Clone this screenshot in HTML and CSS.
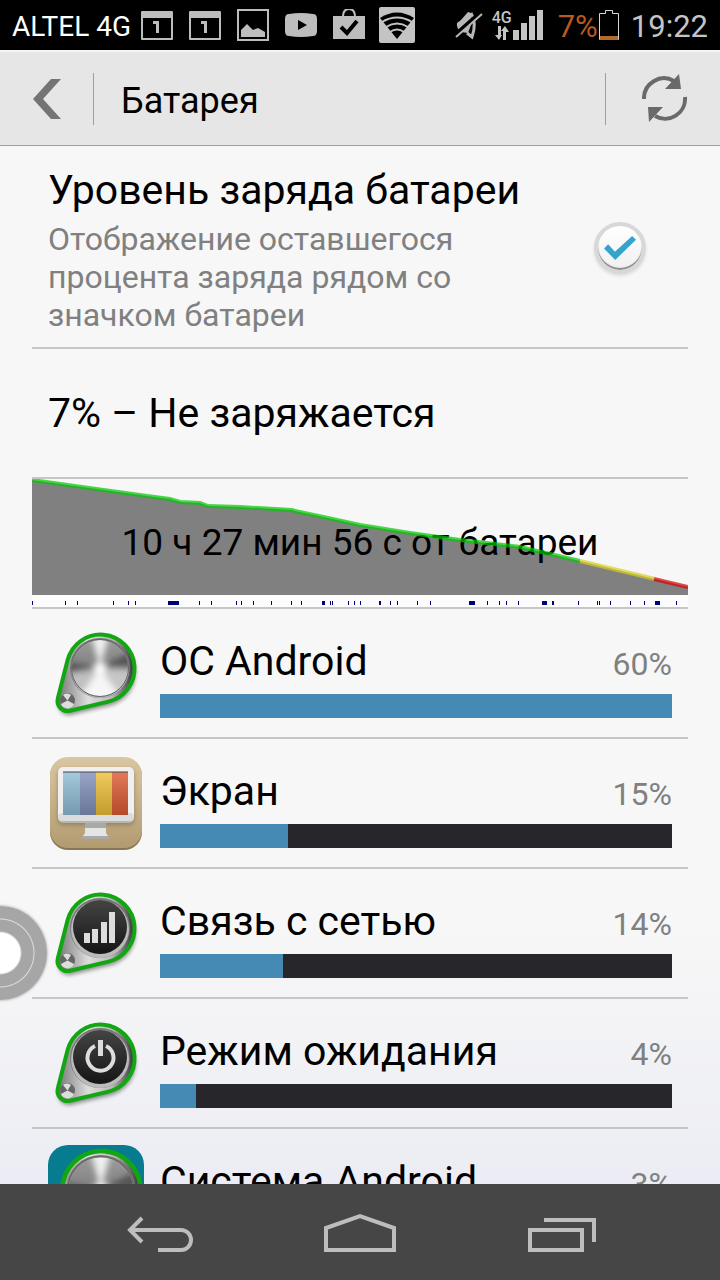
FILE: index.html
```html
<!DOCTYPE html>
<html lang="ru">
<head>
    <meta charset="UTF-8">
    <meta name="viewport" content="width=device-width, initial-scale=1.0">
    <title>Батарея</title>
    <link rel="stylesheet" href="styles.css">
</head>
<body>
    <!-- shared shapes -->
    <svg class="defs" width="0" height="0" aria-hidden="true">
        <defs>
            <linearGradient id="steel" x1="0" y1="0" x2="0" y2="1">
                <stop offset="0" stop-color="#9c9c9c"/>
                <stop offset="0.5" stop-color="#808080"/>
                <stop offset="1" stop-color="#e4e4e4"/>
            </linearGradient>
            <linearGradient id="rim" x1="0" y1="0" x2="1" y2="0">
                <stop offset="0" stop-color="#777"/>
                <stop offset="0.4" stop-color="#ddd"/>
                <stop offset="0.7" stop-color="#bbb"/>
                <stop offset="1" stop-color="#333"/>
            </linearGradient>
            <linearGradient id="dark" x1="0" y1="0" x2="0" y2="1">
                <stop offset="0" stop-color="#444"/>
                <stop offset="1" stop-color="#151515"/>
            </linearGradient>
            <linearGradient id="sand" x1="0" y1="0" x2="0" y2="1">
                <stop offset="0" stop-color="#d9c7a3"/>
                <stop offset="1" stop-color="#b39b70"/>
            </linearGradient>
            <linearGradient id="shade" x1="0" y1="0" x2="0" y2="1">
                <stop offset="0" stop-color="#fff" stop-opacity="0.2"/>
                <stop offset="1" stop-color="#000" stop-opacity="0.18"/>
            </linearGradient>
            <filter id="soft" x="-20%" y="-20%" width="140%" height="140%"><feGaussianBlur stdDeviation="2"/></filter>
            <filter id="softer" x="-20%" y="-20%" width="140%" height="140%"><feGaussianBlur stdDeviation="3"/></filter>
            <clipPath id="disc"><circle cx="52" cy="43" r="28"/></clipPath>
            <g id="case">
                <path d="M19.6 35.1A34 34 0 1 1 60.4 76.6L21.8 85.7A10 10 0 0 1 9.8 73.5Z" transform="translate(1 4)" fill="#000" opacity="0.45" filter="url(#soft)"/>
                <path d="M19.6 35.1A34 34 0 1 1 60.4 76.6L21.8 85.7A10 10 0 0 1 9.8 73.5Z" fill="url(#rim)" stroke="#12a612" stroke-width="4"/>
                <circle cx="19.5" cy="75.5" r="7.5" fill="#666"/>
                <path d="M19.5 75.5L15 70A7 7 0 0 1 23 70ZM19.5 75.5L26 79A7 7 0 0 1 13 79Z" fill="#ddd"/>
                <circle cx="52" cy="43" r="30" fill="#777"/>
                <circle cx="52" cy="44" r="29" fill="#bbb"/>
            </g>
            <g id="knob">
                <use href="#case"/>
                <g clip-path="url(#disc)">
                    <circle cx="52" cy="43" r="29" fill="url(#steel)"/>
                    <g filter="url(#softer)">
                        <path d="M52 43L42 6H62Z" fill="#f0f0f0"/>
                        <path d="M52 43L84 26L90 42Z" fill="#555"/>
                        <path d="M52 43L14 49V36Z" fill="#555"/>
                        <path d="M52 43L14 50V66L30 76Z" fill="#c0c0c0"/>
                        <path d="M52 43L26 80H78Z" fill="#f6f6f6"/>
                        <path d="M52 43L90 45V66L76 76Z" fill="#c6c6c6"/>
                        <circle cx="52" cy="43" r="6" fill="#fff"/>
                    </g>
                </g>
                <circle cx="52" cy="43" r="28.5" fill="none" stroke="#666"/>
            </g>
        </defs>
    </svg>

    <div class="statusbar">
        <span class="carrier">ALTEL 4G</span>
        <div class="notices">
            <svg width="32" height="32" viewBox="0 0 32 32"><path fill="#bdbdbd" fill-rule="evenodd" d="M1 2H31Q32 2 32 3V30Q32 31 31 31H1Q0 31 0 30V3Q0 2 1 2ZM2 9V29H30V9Z"/><path fill="#bdbdbd" d="M12 12H18V24H15V15H12Z"/></svg>
            <svg width="32" height="32" viewBox="0 0 32 32"><path fill="#bdbdbd" fill-rule="evenodd" d="M1 2H31Q32 2 32 3V30Q32 31 31 31H1Q0 31 0 30V3Q0 2 1 2ZM2 9V29H30V9Z"/><path fill="#bdbdbd" d="M12 12H18V24H15V15H12Z"/></svg>
            <svg width="32" height="32" viewBox="0 0 32 32"><rect x="1" y="1" width="30" height="30" fill="none" stroke="#bdbdbd" stroke-width="2"/><path fill="#bdbdbd" d="M4 28V21L10 15L16 21L21 19L28 23V28Z"/></svg>
            <svg width="32" height="32" viewBox="0 0 32 32"><path fill="#bdbdbd" fill-rule="evenodd" d="M4 5Q16 3 28 5Q32 5 32 10V22Q32 27 28 27Q16 29 4 27Q0 27 0 22V10Q0 5 4 5ZM13 11V21L22 16Z"/></svg>
            <svg width="32" height="32" viewBox="0 0 32 32"><path fill="none" stroke="#bdbdbd" stroke-width="2" d="M10 8Q10 0 16 0T22 8"/><path fill="#bdbdbd" d="M0 7H32V30H0Z"/><path fill="none" stroke="#000" stroke-width="4" d="M8 18L14 24L24 12"/></svg>
        </div>
        <svg class="wifi" width="36" height="36" viewBox="0 0 36 36"><rect width="36" height="36" rx="2" fill="#c4c4c4"/><path d="M1 11Q18 0 35 11L18 32Z"/><g fill="none" stroke="#c4c4c4" stroke-width="2"><path d="M3 15Q18 6 33 15"/><path d="M7 20Q18 13 29 20"/><path d="M11 25Q18 20 25 25"/></g></svg>
        <div class="system">
            <svg class="mute" width="28" height="32" viewBox="0 0 28 32"><path fill="#b8b8b8" d="M2 14L6 11L13 3L16 4V16L13 24L6 23Q1 19 2 14Z"/><path fill="none" stroke="#b8b8b8" stroke-width="3" d="M16 4Q22 14 17 28L12 24"/><path stroke="#000" stroke-width="4" d="M0 26L26 3"/><path stroke="#b8b8b8" stroke-width="2" d="M1 28L27 5"/></svg>
            <div class="network">
                <div class="network-type">
                    <span>4G</span>
                    <svg width="14" height="15" viewBox="0 0 14 15" fill="#c4c4c4"><path d="M3 0H6V9H7L4 14L0 9H3ZM8 14V5H6L10 0L14 6H11V14Z"/></svg>
                </div>
                <svg width="32" height="32" viewBox="0 0 32 32" fill="#c4c4c4"><path d="M0 21H6V31H0ZM8 14H14V31H8ZM16 7H22V31H16ZM24 1H30V31H24Z"/></svg>
            </div>
            <span class="charge">7%</span>
            <svg class="cell" width="20" height="32" viewBox="0 0 20 32"><path fill="none" stroke="#d5d5d5" d="M.5 30.5V4.5H6.5V1.5H13.5V4.5H19.5V30.5Z"/><path fill="#b06a2c" d="M1 27H19V31H1Z"/></svg>
            <time class="clock">19:22</time>
        </div>
    </div>

    <header class="header">
        <button class="header-btn header-back" aria-label="Назад">
            <svg width="28" height="40" viewBox="0 0 28 40"><path fill="#747474" d="M18 0H28L10 20L28 40H18L0 20Z"/></svg>
        </button>
        <h1>Батарея</h1>
        <button class="header-btn header-refresh" aria-label="Обновить">
            <svg width="46" height="50" viewBox="0 0 46 50"><path fill="none" stroke="#6a6a6a" stroke-width="4" d="M2 25A20 20 0 0 1 32 7M43 23A20 20 0 0 1 13 42"/><path fill="#6a6a6a" d="M37 0L39 15H23ZM6 33H21L7 48Z"/></svg>
        </button>
    </header>

    <main class="main">
        <div class="setting">
            <label class="setting-text" for="show-percent">
                <span class="setting-title">Уровень заряда батареи</span>
                <span class="setting-summary">Отображение оставшегося процента заряда рядом со значком батареи</span>
            </label>
            <input class="check" type="checkbox" id="show-percent" checked>
        </div>
        <div class="state">7% – Не заряжается</div>
        <div class="chart">
            <svg viewBox="0 0 656 128" preserveAspectRatio="none">
                <path fill="#808080" d="M0 1L50 8L115 17L138 20L148 23L168 24L176 27L208 28L260 31L263 32L296 39L328 46L378 54L428 61L488 68L548 82L623 100L656 108V116H0Z"/>
                <path fill="#fcfcfc" d="M0 116H656V128H0Z"/>
                <path fill="#00007f" d="M0 122h1v4h-1ZM33 122h1v4h-1ZM45 122h1v4h-1ZM81 122h1v4h-1ZM96 122h1v4h-1ZM103 122h1v4h-1ZM136 122h11v4h-11ZM167 122h1v4h-1ZM179 122h1v4h-1ZM204 122h1v4h-1ZM209 122h1v4h-1ZM221 122h1v4h-1ZM239 122h1v4h-1ZM259 122h1v4h-1ZM269 122h1v4h-1ZM290 122h3v4h-3ZM298 122h1v4h-1ZM300 122h1v4h-1ZM316 122h1v4h-1ZM322 122h1v4h-1ZM328 122h1v4h-1ZM347 122h2v4h-2ZM358 122h1v4h-1ZM365 122h1v4h-1ZM385 122h1v4h-1ZM398 122h1v4h-1ZM437 122h6v4h-6ZM455 122h1v4h-1ZM467 122h1v4h-1ZM474 122h1v4h-1ZM486 122h1v4h-1ZM510 122h5v4h-5ZM520 122h2v4h-2ZM546 122h1v4h-1ZM565 122h1v4h-1ZM567 122h1v4h-1ZM578 122h1v4h-1ZM598 122h1v4h-1ZM612 122h1v4h-1ZM623 122h5v4h-5ZM644 122h1v4h-1Z"/>
            </svg>
            <span class="chart-label">10 ч 27 мин 56 с от батареи</span>
            <svg class="chart-line" viewBox="0 0 656 128" preserveAspectRatio="none">
                <path stroke="#00c800" d="M0 1L50 8L115 17L138 20L148 23L168 24L176 27L208 28L260 31L263 32L296 39L328 46L378 54L428 61L488 68L548 82"/>
                <path stroke="#d8d020" d="M548 82L623 100"/>
                <path stroke="#d80000" d="M622 100L656 108"/>
            </svg>
        </div>

        <ul class="usage">
            <li class="usage-item">
                <svg class="usage-icon" viewBox="0 0 96 96"><use href="#knob"/></svg>
                <div class="usage-info">
                    <div class="usage-head"><span>ОС Android</span><span class="usage-percent">60%</span></div>
                    <div class="bar"><div class="bar-fill" style="width: 100%"></div></div>
                </div>
            </li>
            <li class="usage-item">
                <svg class="usage-icon" viewBox="0 0 96 96">
                    <rect x="2" y="3" width="92" height="92" rx="18" fill="#8a7650"/>
                    <rect x="2" y="2" width="92" height="91" rx="18" fill="url(#sand)"/>
                    <rect x="10" y="14" width="76" height="56" rx="5" fill="#6b5a38" opacity="0.5" filter="url(#soft)"/>
                    <path fill="#a9a9a9" d="M37 68H58V77L62 84H33L37 77Z"/>
                    <path fill="#e4e4e4" d="M37 73H58V78L60 81H35L37 78Z"/>
                    <rect x="10" y="12" width="76" height="56" rx="5" fill="#b5b5b5"/>
                    <rect x="10" y="12" width="76" height="54" rx="5" fill="#f0f0f0"/>
                    <rect x="10" y="58" width="76" height="8" rx="4" fill="#dcdcdc"/>
                    <path fill="#8fbdd6" d="M15 17H32V60H15Z"/>
                    <path fill="#8090ba" d="M32 17H48V60H32Z"/>
                    <path fill="#eebf38" d="M48 17H64V60H48Z"/>
                    <path fill="#dc5a32" d="M64 17H80V60H64Z"/>
                    <path fill="url(#shade)" d="M15 17H80V60H15Z"/>
                    <path fill="#444" opacity="0.5" d="M15 16H80V18H15Z"/>
                </svg>
                <div class="usage-info">
                    <div class="usage-head"><span>Экран</span><span class="usage-percent">15%</span></div>
                    <div class="bar"><div class="bar-fill" style="width: 25%"></div></div>
                </div>
            </li>
            <li class="usage-item">
                <svg class="usage-icon" viewBox="0 0 96 96">
                    <use href="#case"/>
                    <circle cx="52" cy="42" r="27" fill="url(#dark)"/>
                    <path fill="#ddd" d="M36 48H42V58H36ZM44 44H50V58H44ZM53 37H59V58H53ZM61 27H67V58H61Z"/>
                </svg>
                <div class="usage-info">
                    <div class="usage-head"><span>Связь с сетью</span><span class="usage-percent">14%</span></div>
                    <div class="bar"><div class="bar-fill" style="width: 24%"></div></div>
                </div>
            </li>
            <li class="usage-item">
                <svg class="usage-icon" viewBox="0 0 96 96">
                    <use href="#case"/>
                    <circle cx="52" cy="42" r="27" fill="url(#dark)"/>
                    <path fill="none" stroke="#ddd" stroke-width="4" d="M47 31A13 13 0 1 0 58 31"/>
                    <path fill="#ddd" d="M50 25H55V41H50Z"/>
                </svg>
                <div class="usage-info">
                    <div class="usage-head"><span>Режим ожидания</span><span class="usage-percent">4%</span></div>
                    <div class="bar"><div class="bar-fill" style="width: 7%"></div></div>
                </div>
            </li>
            <li class="usage-item">
                <svg class="usage-icon" viewBox="0 0 96 96">
                    <rect width="96" height="96" rx="20" fill="#077c90"/>
                    <use href="#knob" transform="translate(-7 -5) scale(1.15)"/>
                </svg>
                <div class="usage-info">
                    <div class="usage-head"><span>Система Android</span><span class="usage-percent">3%</span></div>
                    <div class="bar"><div class="bar-fill" style="width: 5%"></div></div>
                </div>
            </li>
        </ul>
        <button class="assist" aria-label="Плавающая кнопка"></button>
    </main>

    <nav class="navbar">
        <button aria-label="Назад"><svg width="72" height="48" viewBox="0 0 72 48"><path d="M20 10L8 22L20 34M8 22H59A10 10 0 0 1 59 42H36"/></svg></button>
        <button aria-label="Домой"><svg width="76" height="48" viewBox="0 0 76 48"><path d="M4 42V20L38 8L72 20V42Z"/></svg></button>
        <button aria-label="Недавние"><svg width="72" height="48" viewBox="0 0 72 48"><path d="M4 22H56V42H4ZM18 12H68V34"/></svg></button>
    </nav>
</body>
</html>
```
FILE: styles.css
```css
*,*::before,*::after{
    padding: 0;
    margin: 0;
    box-sizing: border-box;
}
body{
    height: 100vh;
    display: flex;
    flex-direction: column;
    overflow: hidden;
    font-family: Roboto, "Noto Sans", sans-serif;
    color: #000;
    background: #f7f7f7;
}
svg{
    display: block;
    flex-shrink: 0;
}
button{
    border: none;
    background: none;
    cursor: pointer;
}
.defs{
    position: absolute;
}

/* status bar */
.statusbar{
    height: 50px;
    flex-shrink: 0;
    display: flex;
    align-items: center;
    padding: 0 12px;
    background-color: #000;
    color: #c4c4c4;
}
.carrier{
    padding-top: 2px;
    font-size: 28px;
    color: #fff;
    margin-right: 10px;
}
.notices{
    display: flex;
    gap: 16px;
}
.wifi{
    margin-left: 14px;
}
.system{
    margin-left: auto;
    display: flex;
    align-items: center;
}
.mute{
    margin-right: 8px;
}
.network{
    display: flex;
    align-items: center;
    margin-right: 13px;
}
.network-type{
    width: 22px;
    display: flex;
    flex-direction: column;
    align-items: center;
    font-size: 16px;
    line-height: 16px;
    font-weight: 500;
}
.charge,
.clock{
    padding-top: 3px;
    font-size: 31px;
}
.charge{
    color: #b85a22;
}
.cell{
    margin: 0 12px 0 1px;
}

/* header */
.header{
    height: 96px;
    flex-shrink: 0;
    display: flex;
    align-items: center;
    background-color: #e6e6e6;
    border-top: 2px solid #f5f5f5;
    border-bottom: 1px solid #a0a0a0;
}
.header h1{
    flex: 1;
    padding: 4px 0 0 27px;
    font-size: 36px;
    font-weight: 400;
    line-height: 52px;
}
.header-btn{
    height: 52px;
    display: flex;
    align-items: center;
}
.header-back{
    width: 94px;
    padding-left: 33px;
    border-right: 1px solid #a0a0a0;
}
.header-refresh{
    width: 115px;
    padding-left: 36px;
    border-left: 1px solid #a0a0a0;
}

/* content */
.main{
    flex: 1;
    min-height: 0;
    position: relative;
    overflow: hidden;
    padding: 0 32px;
    background: linear-gradient(#f7f7f7 75%, #ecedf4);
}
.setting{
    display: flex;
    align-items: center;
    padding: 16px 42px 13px 16px;
    border-bottom: 2px solid #c6c6c6;
}
.setting-text{
    flex: 1;
}
.setting-title,
.setting-summary{
    display: block;
}
.setting-title{
    margin-bottom: 2px;
    font-size: 41px;
    line-height: 56px;
}
.setting-summary{
    max-width: 440px;
    font-size: 32px;
    line-height: 38px;
    color: #808080;
}
.check{
    appearance: none;
    width: 52px;
    height: 52px;
    border: 4px solid #d8d8d8;
    border-radius: 50%;
    background: linear-gradient(#fff, #f0f0f0);
    background-clip: padding-box;
    box-shadow: inset 0 -2px 1px #8a8a8a, 0 2px 3px #ddd;
    cursor: pointer;
}
.check:checked::after{
    content: "";
    display: block;
    width: 32px;
    height: 24px;
    margin: 10px 6px;
    background-color: #35a3cc;
    clip-path: polygon(0 52%, 13% 34%, 34% 66%, 88% 0, 100% 16%, 35% 100%);
}
.state{
    padding: 0 16px;
    font-size: 41px;
    line-height: 128px;
    border-bottom: 2px solid #c6c6c6;
}
.chart{
    display: grid;
    border-bottom: 2px solid #c6c6c6;
}
.chart > *{
    grid-area: 1 / 1;
    width: 100%;
    height: 128px;
}
.chart-label{
    font-size: 37px;
    line-height: 128px;
    text-align: center;
}
.chart-line{
    fill: none;
    stroke-width: 4;
    opacity: 0.7;
}

.usage{
    list-style: none;
}
.usage-item{
    display: flex;
    gap: 16px;
    padding: 16px;
    border-bottom: 2px solid #c6c6c6;
}
.usage-icon{
    width: 96px;
    height: 96px;
}
.usage-info{
    flex: 1;
    padding-top: 12px;
}
.usage-head{
    display: flex;
    justify-content: space-between;
    align-items: baseline;
    margin-bottom: 9px;
    font-size: 41px;
    line-height: 48px;
}
.usage-percent{
    font-size: 32px;
    line-height: 40px;
    color: #808080;
}
.bar{
    height: 24px;
    background-color: #27272b;
}
.bar-fill{
    height: 100%;
    background-color: #448ab5;
}

/* floating button on the left edge */
.assist{
    position: absolute;
    left: -47px;
    top: 760px;
    width: 94px;
    height: 94px;
    border-radius: 50%;
    background: radial-gradient(circle, #fff 20px, #a6a6a6 22px, #a6a6a6 33px, #ddd 34px, #a6a6a6 35px);
    box-shadow: 0 0 3px #999;
}

/* bottom buttons */
.navbar{
    height: 96px;
    flex-shrink: 0;
    display: flex;
    justify-content: center;
    align-items: center;
    gap: 128px;
    background-color: #464646;
}
.navbar svg{
    fill: none;
    stroke: #bdbdbd;
    stroke-width: 4;
}
```
